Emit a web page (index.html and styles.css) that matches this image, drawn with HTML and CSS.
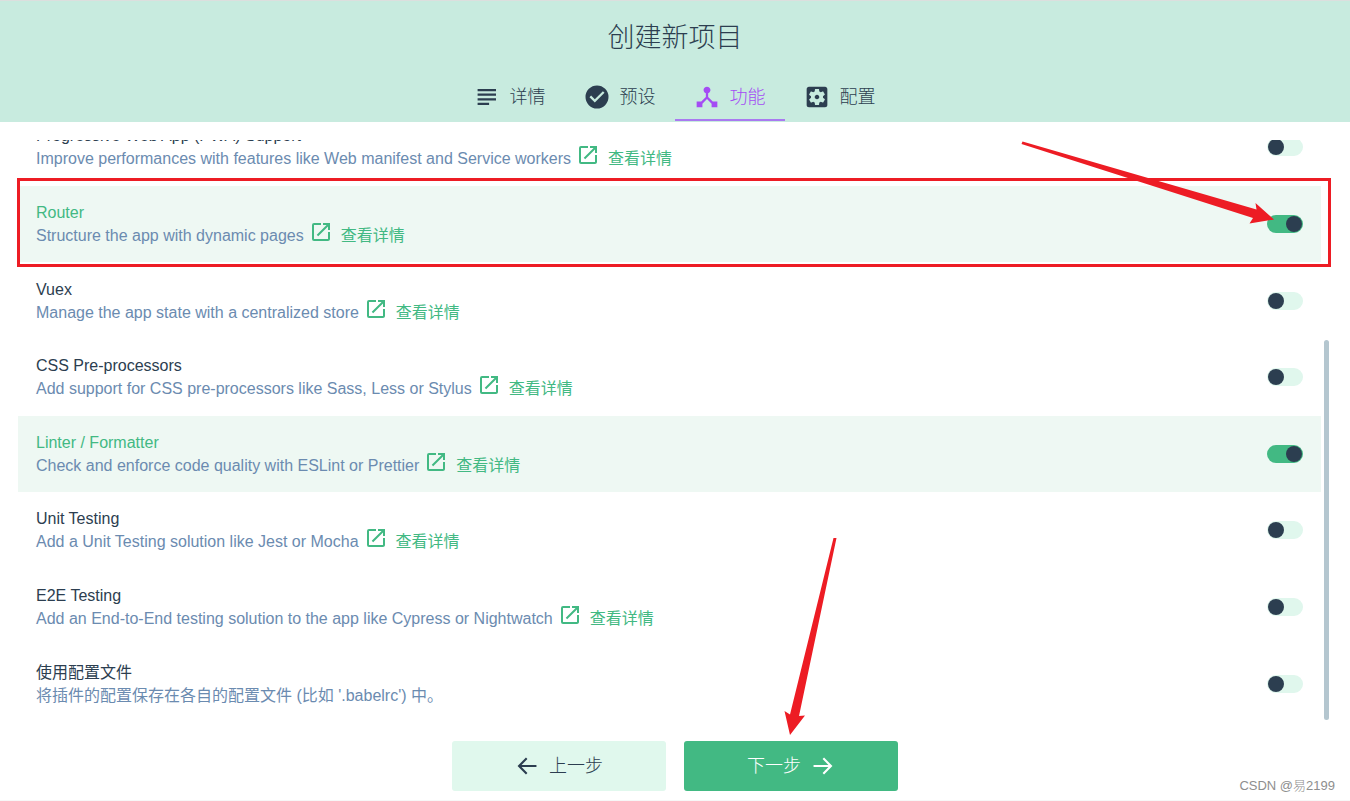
FILE: index.html
```html
<!DOCTYPE html>
<html lang="zh-CN">
<head>
<meta charset="utf-8">
<title>创建新项目</title>
<link rel="stylesheet" href="styles.css">
</head>
<body>
<svg class="symbols" aria-hidden="true">
  <symbol id="open" viewBox="0 0 24 24"><path d="M19 19H5V5h7V3H5a2 2 0 0 0-2 2v14a2 2 0 0 0 2 2h14c1.100 0 2-.9 2-2v-7h-2v7zM14 3v2h3.590l-9.830 9.830 1.410 1.410L19 6.410V10h2V3h-7z"/></symbol>
</svg>
<div class="page">
  <header class="header">
    <h1 class="title">创建新项目</h1>
    <nav class="tabs">
      <button class="tab" type="button"><svg class="icon" viewBox="0 0 24 24"><path d="M14 17H4v2h10v-2zm6-8H4v2h16V9zM4 15h16v-2H4v2zM4 5v2h16V5H4z" transform="translate(-2 -1.800) scale(1.150)"/></svg><span>详情</span></button>
      <button class="tab" type="button"><svg class="icon" viewBox="0 0 24 24"><path d="M12 .5A11.500 11.500 0 1 0 12 23.500 11.500 11.500 0 0 0 12 .5zM9.800 17.500L4.500 12.200l1.600-1.600 3.700 3.700 8.100-8.100 1.600 1.600z"/></svg><span>预设</span></button>
      <button class="tab active" type="button"><svg class="icon" viewBox="0 0 24 24"><path d="M17 16l-4-4V8.820C14.160 8.400 15 7.300 15 6c0-1.660-1.340-3-3-3S9 4.340 9 6c0 1.300.84 2.400 2 2.820V12l-4 4H3v5h5v-3.050l4-4.200 4 4.200V21h5v-5h-4z" transform="translate(-1.800 -1.800) scale(1.150)"/></svg><span>功能</span></button>
      <button class="tab" type="button"><svg class="icon" viewBox="0 0 24 24"><path transform="translate(-1.800 -1.800) scale(1.150)" d="M12 10c-1.100 0-2 .9-2 2s.9 2 2 2 2-.9 2-2-.9-2-2-2zm7-7H5c-1.110 0-2 .9-2 2v14c0 1.100.89 2 2 2h14c1.110 0 2-.9 2-2V5c0-1.100-.89-2-2-2zm-1.750 9c0 .23-.02.46-.05.68l1.480 1.160c.13.110.17.300.08.450l-1.400 2.420c-.09.150-.27.210-.43.150l-1.740-.7c-.36.280-.76.510-1.180.690l-.26 1.850c-.03.170-.18.300-.35.300h-2.800c-.17 0-.32-.13-.35-.29l-.26-1.850c-.43-.18-.82-.41-1.180-.69l-1.740.7c-.16.060-.34 0-.43-.15l-1.400-2.420c-.09-.15-.05-.34.080-.45l1.480-1.160c-.03-.23-.05-.46-.05-.69s.020-.46.050-.68l-1.480-1.160c-.13-.11-.17-.3-.08-.45l1.400-2.420c.09-.15.270-.21.430-.15l1.740.7c.36-.28.760-.51 1.180-.69l.26-1.850c.03-.17.180-.3.350-.3h2.800c.17 0 .32.130.350.290l.26 1.850c.43.180.820.410 1.180.690l1.740-.7c.16-.06.340 0 .43.150l1.400 2.420c.09.150.050.340-.08.450l-1.480 1.160c.03.230.050.460.050.690z"/></svg><span>配置</span></button>
    </nav>
  </header>

  <main class="scroller">
    <div class="features">
      <div class="feature">
        <div class="info"><label class="name" for="pwa">Progressive Web App (PWA) Support</label>
          <div class="description"><span>Improve performances with features like Web manifest and Service workers</span><a class="more" href="#pwa"><svg class="link-icon"><use href="#open"/></svg>查看详情</a></div></div>
        <input class="switch" type="checkbox" id="pwa">
      </div>
      <div class="feature">
        <div class="info"><label class="name" for="router">Router</label>
          <div class="description"><span>Structure the app with dynamic pages</span><a class="more" href="#router"><svg class="link-icon"><use href="#open"/></svg>查看详情</a></div></div>
        <input class="switch" type="checkbox" id="router" checked>
      </div>
      <div class="feature">
        <div class="info"><label class="name" for="vuex">Vuex</label>
          <div class="description"><span>Manage the app state with a centralized store</span><a class="more" href="#vuex"><svg class="link-icon"><use href="#open"/></svg>查看详情</a></div></div>
        <input class="switch" type="checkbox" id="vuex">
      </div>
      <div class="feature">
        <div class="info"><label class="name" for="css">CSS Pre-processors</label>
          <div class="description"><span>Add support for CSS pre-processors like Sass, Less or Stylus</span><a class="more" href="#css"><svg class="link-icon"><use href="#open"/></svg>查看详情</a></div></div>
        <input class="switch" type="checkbox" id="css">
      </div>
      <div class="feature">
        <div class="info"><label class="name" for="linter">Linter / Formatter</label>
          <div class="description"><span>Check and enforce code quality with ESLint or Prettier</span><a class="more" href="#linter"><svg class="link-icon"><use href="#open"/></svg>查看详情</a></div></div>
        <input class="switch" type="checkbox" id="linter" checked>
      </div>
      <div class="feature">
        <div class="info"><label class="name" for="unit">Unit Testing</label>
          <div class="description"><span>Add a Unit Testing solution like Jest or Mocha</span><a class="more" href="#unit"><svg class="link-icon"><use href="#open"/></svg>查看详情</a></div></div>
        <input class="switch" type="checkbox" id="unit">
      </div>
      <div class="feature">
        <div class="info"><label class="name" for="e2e">E2E Testing</label>
          <div class="description"><span>Add an End-to-End testing solution to the app like Cypress or Nightwatch</span><a class="more" href="#e2e"><svg class="link-icon"><use href="#open"/></svg>查看详情</a></div></div>
        <input class="switch" type="checkbox" id="e2e">
      </div>
      <div class="feature">
        <div class="info"><label class="name" for="files">使用配置文件</label>
          <div class="description"><span>将插件的配置保存在各自的配置文件 (比如 '.babelrc') 中。</span></div></div>
        <input class="switch" type="checkbox" id="files">
      </div>
    </div>
    <div class="thumb"></div>
  </main>

  <footer class="actions">
    <button class="action" type="button"><svg class="icon" viewBox="0 0 24 24"><path d="M21 11H6.830l5.580-5.590L11 4l-8 8 8 8 1.410-1.410L6.830 13H21z" transform="translate(-.6 -.6) scale(1.050)"/></svg><span>上一步</span></button>
    <button class="action primary" type="button"><span>下一步</span><svg class="icon" viewBox="0 0 24 24"><path d="M3 11h14.170l-5.580-5.590L13 4l8 8-8 8-1.410-1.410L17.170 13H3z" transform="translate(-.6 -.6) scale(1.050)"/></svg></button>
    <span class="watermark">CSDN @易2199</span>
  </footer>

  <div class="highlight"></div>
  <svg class="arrows" width="1350" height="801" viewBox="0 0 1350 801" aria-hidden="true">
    <path d="M1022.500 141.500L1256.500 209.500 1255.500 203 1274 219.500 1249.500 223.500 1253 218 1021.500 144Z"/>
    <path d="M833.500 538L790 714.500 784.500 711 790 735 805 715.500 799 716 836.500 538Z"/>
  </svg>
</div>
</body>
</html>
```
FILE: styles.css
```css
* { box-sizing: border-box; }

body {
  margin: 0;
  background: #fff;
  color: #2c3e50;
  font: 300 16px/23px "Liberation Sans", "Noto Sans CJK SC", sans-serif;
}

button { font: inherit; color: inherit; border: 0; cursor: pointer; }

.symbols { display: none; }

.page {
  position: relative;
  display: flex;
  flex-direction: column;
  height: 100vh;
  overflow: hidden;
  border-bottom: 1px solid #f7f7f7;
}

.header {
  flex: none;
  background: #c8ebdf;
  border-top: 1px solid #dcdfde;
  padding-bottom: 1px;
}

.title {
  margin: 0;
  padding-top: 17px;
  font-size: 27px;
  line-height: 40px;
  font-weight: 300;
  text-align: center;
}

.tabs { display: flex; justify-content: center; padding-top: 13px; }

.tab {
  display: flex;
  align-items: center;
  justify-content: center;
  gap: 11px;
  width: 110px;
  height: 50px;
  padding: 3px 0 0;
  background: none;
  border-bottom: 2px solid transparent;
  font-size: 18px;
  line-height: 26px;
}

.tab.active { color: #a44cf4; border-color: #a97af0; }

.icon { width: 24px; height: 24px; fill: currentColor; }

.scroller {
  position: relative;
  flex: 1;
  min-height: 0;
  display: flex;
  flex-direction: column;
  justify-content: flex-end;
  overflow: hidden;
  margin: 18px 18px 0;
  padding-right: 11px;
  font-weight: 400;
}

.features { flex: none; display: grid; grid-template-rows: repeat(8, 1fr); height: 613px; }

.feature {
  display: flex;
  align-items: center;
  justify-content: space-between;
  padding: 0 18px;
}

.feature:has(:checked) { background: #eef8f3; }
.feature:has(:checked) .name { color: #42b983; }

.name { display: block; }

.description { display: flex; align-items: center; height: 23px; color: #6b8bb0; }

.more {
  display: flex;
  align-items: center;
  color: #42b983;
  text-decoration: none;
}

.link-icon { width: 24px; height: 24px; margin: 0 8px 7px 5px; fill: currentColor; }

.switch {
  appearance: none;
  display: flex;
  width: 36px;
  height: 18px;
  margin: 0;
  padding: 1px;
  border-radius: 9px;
  background: #e0f7ed;
}

.switch::before {
  content: "";
  width: 16px;
  height: 16px;
  border-radius: 50%;
  background: #2c3e50;
}

.switch:checked { background: #42b983; justify-content: flex-end; }

.thumb {
  position: absolute;
  right: 3px;
  bottom: 2px;
  width: 5px;
  height: 380px;
  border-radius: 3px;
  background: #b4c6cf;
}

.actions {
  position: relative;
  flex: none;
  display: flex;
  justify-content: center;
  gap: 18px;
  padding: 19px 18px 9px;
}

.action {
  display: flex;
  align-items: center;
  justify-content: center;
  gap: 10px;
  width: 214px;
  height: 50px;
  padding: 0;
  border-radius: 3px;
  background: #e0f8ed;
  font-size: 18px;
}

.action.primary { background: #42b983; color: #fff; }

.watermark {
  position: absolute;
  right: 15px;
  bottom: 3px;
  color: #8e8e8e;
  font-size: 13px;
}

.highlight {
  position: absolute;
  top: 178px;
  left: 17px;
  right: 19px;
  height: 89px;
  border: 3px solid #ed1c24;
  pointer-events: none;
}

.arrows { position: absolute; top: 0; left: 0; fill: #ed1c24; pointer-events: none; }
```
